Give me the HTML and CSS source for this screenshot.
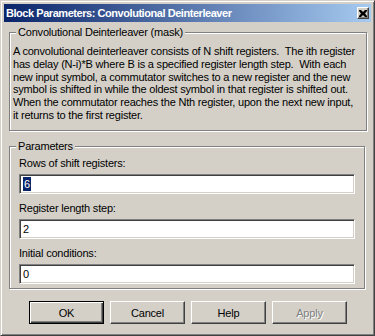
FILE: index.html
```html
<!DOCTYPE html>
<html lang="en">
<head>
  <meta charset="UTF-8">
  <title>Block Parameters: Convolutional Deinterleaver</title>
  <link rel="stylesheet" href="styles.css">
</head>
<body>

  <div class="window">
    <!-- Caption -->
    <div class="titlebar">
      <span class="title">Block Parameters: Convolutional Deinterleaver</span>
      <span class="close-btn">
        <svg width="8" height="7" viewBox="0 0 8 7">
          <path d="M0 0h2l2 2 2-2h2v1l-2 2.5 2 2.5v1h-2l-2-2-2 2h-2v-1l2-2.5-2-2.5z" fill="#000"/>
        </svg>
      </span>
    </div>

    <div class="content">
      <!-- Description -->
      <div class="group group-desc">
        <span class="legend">Convolutional Deinterleaver (mask)</span>
        <p class="desc">A convolutional deinterleaver consists of N shift registers.  The ith register
has delay (N-i)*B where B is a specified register length step.  With each
new input symbol, a commutator switches to a new register and the new
symbol is shifted in while the oldest symbol in that register is shifted out.
When the commutator reaches the Nth register, upon the next new input,
it returns to the first register.</p>
      </div>

      <!-- Parameters -->
      <div class="group group-params">
        <span class="legend">Parameters</span>
        <div class="field">
          <label class="field-label">Rows of shift registers:</label>
          <div class="edit"><span class="selected">6</span></div>
        </div>
        <div class="field">
          <label class="field-label">Register length step:</label>
          <div class="edit">2</div>
        </div>
        <div class="field">
          <label class="field-label">Initial conditions:</label>
          <div class="edit">0</div>
        </div>
      </div>

      <!-- Buttons -->
      <div class="buttons">
        <div class="btn default"><span>OK</span></div>
        <div class="btn"><span>Cancel</span></div>
        <div class="btn"><span>Help</span></div>
        <div class="btn disabled"><span>Apply</span></div>
      </div>
    </div>
  </div>

</body>
</html>
```

FILE: styles.css
```css
html, body {
  margin: 0;
  padding: 0;
  background: #d4d0c8;
  font-family: 'Liberation Sans', Arial, sans-serif;
  font-size: 11px;
  letter-spacing: -0.2px;
  color: #000;
}

.window {
  box-sizing: border-box;
  width: 375px;
  height: 336px;
  padding: 3px;
  border: 1px solid;
  border-color: #d4d0c8 #404040 #404040 #d4d0c8;
  box-shadow: inset 1px 1px 0 #fff, inset -1px -1px 0 #808080;
  background: #d4d0c8;
}

.titlebar {
  height: 18px;
  display: flex;
  align-items: center;
  justify-content: space-between;
  padding: 0 2px 0 2px;
  background: linear-gradient(to right, #0a246a, #a6caf0);
}

.title {
  color: #fff;
  font-weight: bold;
  font-size: 11px;
  letter-spacing: -0.45px;
  white-space: nowrap;
}

.close-btn {
  box-sizing: border-box;
  width: 12px;
  height: 12px;
  display: flex;
  align-items: center;
  justify-content: center;
  background: #d4d0c8;
  border: 1px solid;
  border-color: #fff #404040 #404040 #fff;
  box-shadow: inset -1px -1px 0 #808080;
}

.content {
  padding: 10px 5px 0 5px;
}

.group {
  position: relative;
  width: 356px;
  border: 1px solid #808080;
  box-shadow: inset 1px 1px 0 #fff, 1px 1px 0 #fff;
}

.legend {
  position: absolute;
  top: -7px;
  left: 6px;
  padding: 0 2px;
  line-height: 13px;
  background: #d4d0c8;
  white-space: nowrap;
}

.group-desc {
  height: 97px;
}

.desc {
  margin: 0;
  padding: 12px 0 0 3px;
  line-height: 12.8px;
  white-space: pre;
}

.group-params {
  margin-top: 15px;
  height: 143px;
  box-sizing: border-box;
  padding: 10px 0 0 9px;
}

.field {
  display: flex;
  flex-direction: column;
  gap: 4px;
  margin-bottom: 8px;
}

.field-label {
  line-height: 13px;
}

.edit {
  box-sizing: border-box;
  width: 336px;
  height: 20px;
  padding: 2px 0 0 3px;
  background: #fff;
  border: 1px solid;
  border-color: #808080 #fff #fff #808080;
  box-shadow: inset 1px 1px 0 #404040, inset -1px -1px 0 #d4d0c8;
  line-height: 14px;
}

.selected {
  display: inline-block;
  padding: 0 1px;
  background: #0a246a;
  color: #fff;
}

.buttons {
  display: flex;
  gap: 6px;
  padding: 12px 0 0 20px;
}

.btn {
  box-sizing: border-box;
  width: 75px;
  height: 23px;
  display: flex;
  align-items: center;
  justify-content: center;
  background: #d4d0c8;
  border: 1px solid;
  border-color: #fff #404040 #404040 #fff;
  box-shadow: inset -1px -1px 0 #808080;
}

.btn.default {
  border: 1px solid #000;
  box-shadow: inset 1px 1px 0 #fff, inset -1px -1px 0 #404040, inset -2px -2px 0 #808080;
}

.btn.disabled {
  color: #808080;
  text-shadow: 1px 1px 0 #fff;
}
```
